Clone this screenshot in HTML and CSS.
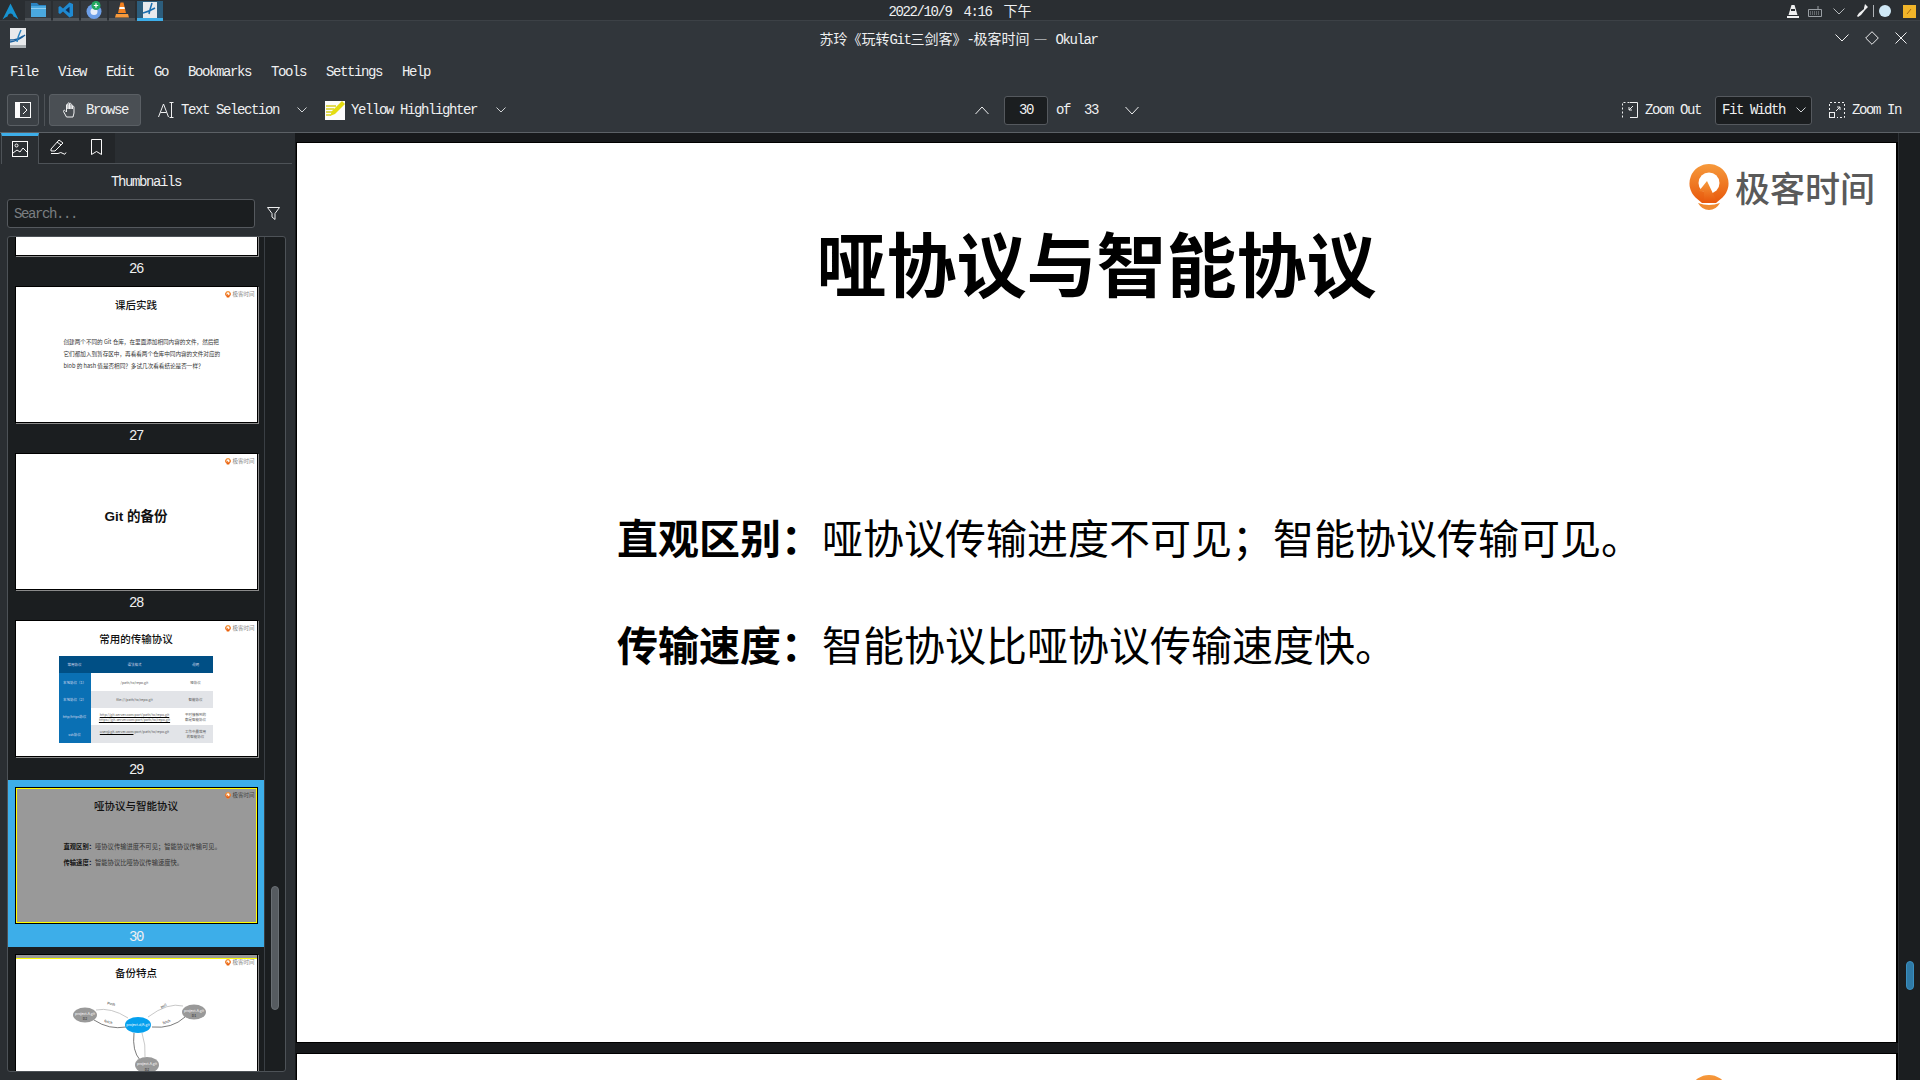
FILE: index.html
```html
<!DOCTYPE html>
<html lang="zh-CN">
<head>
	<meta charset="utf-8">
	<title>Okular</title>
	<link rel="stylesheet" href="styles.css">
</head>
<body>
	<svg class="defs" width="0" height="0">
		<defs>
			<linearGradient id="geek" x1="0" y1="0" x2="0" y2="1">
				<stop offset="0" stop-color="#f69a3c"/>
				<stop offset="1" stop-color="#e8580c"/>
			</linearGradient>
			<symbol id="logo" viewBox="0 0 40 46">
				<path fill="url(#geek)" d="M20 0a19.500 19.500 0 0 1 13.500 33.600L27 39H13l-6.500-5.400A19.500 19.500 0 0 1 20 0z"/>
				<circle cx="20" cy="19" r="10.500" fill="#fff"/>
				<path fill="url(#geek)" d="M18 17l-8 10 5 1v10h13z"/>
				<path fill="#f08a30" d="M9 39q11 4 22 0q-4 7-11 7t-11-7z"/>
			</symbol>
		</defs>
	</svg>

	<div class="panel">
		<div class="tasks">
			<svg class="arch" width="17" height="17" viewBox="0 0 17 17"><path fill="#1793d1" d="M8.500 0.500L16.500 16.500Q12.500 13.500 11.500 13.500Q10.800 10.500 8.500 10.500Q6.200 10.500 5.500 13.500Q4.500 13.500 0.500 16.500z"/></svg>
			<div class="task">
				<svg width="17" height="16" viewBox="0 0 17 16"><path fill="#2b83c0" d="M1 1h6l2 2h7v3H1z"/><rect x="1" y="4" width="15" height="11" fill="#4aa8de"/><rect x="1" y="6" width="15" height="1" fill="#8fcdf0"/></svg>
			</div>
			<div class="task">
				<svg width="16" height="16" viewBox="0 0 16 16"><path fill="#1f8ad2" d="M11.500 0.500L15 2v12l-3.500 1.500L5 9.500 2 12 0.500 11V5L2 4l3 2.500z"/><path fill="#0f2f55" d="M11.500 4.800L7.500 8l4 3.200z"/></svg>
			</div>
			<div class="task">
				<svg width="18" height="18" viewBox="0 0 18 18"><circle cx="9" cy="10.500" r="7.500" fill="#6d9fe8"/><circle cx="9" cy="10.500" r="3.500" fill="#e8eefa"/><circle cx="11" cy="4.500" r="4.500" fill="#22a860"/><path stroke="#fff" stroke-width="1.200" d="M11 2.300v4.400M8.800 4.500h4.400"/></svg>
			</div>
			<div class="task">
				<svg width="14" height="16" viewBox="0 0 14 16"><path fill="#f58220" d="M5.500 0.500h3L11 11H3z"/><path fill="#fff" d="M4.600 5h4.800l.5 2H4.100z"/><path fill="#f79a3c" d="M1 12h12l1 3.500H0z"/></svg>
			</div>
			<div class="task task-on">
				<svg width="14" height="16" viewBox="0 0 14 16"><rect width="14" height="16" fill="#e8eaec"/><path fill="none" stroke="#1a6fb0" stroke-width="1.500" d="M0 11q7 -2 12 -5M9 1Q7 7 6 12"/></svg>
			</div>
		</div>
		<div class="clock">2022/10/9 4:16 <span class="cjk">下午</span></div>
		<div class="tray">
			<svg width="12" height="13" viewBox="0 0 12 13"><path fill="#eff0f1" d="M4.500 0h3l3 10h-9z"/><path fill="#2a2e32" d="M4 4h4v2H4z"/><rect y="11" width="12" height="2" fill="#eff0f1"/></svg>
			<svg class="tray-kbd" width="14" height="11" viewBox="0 0 14 11"><path fill="none" stroke="#9a9fa4" d="M.5 3.500h13v7H.5zM10 3.500V0"/><path stroke="#9a9fa4" stroke-dasharray="1 1" d="M2 6h10M2 8h10"/></svg>
			<svg width="12" height="7" viewBox="0 0 12 7"><path fill="none" stroke="#b4b8bb" d="M.5.500L6 6 11.500.500"/></svg>
			<svg class="tray-pen" width="12" height="14" viewBox="0 0 12 14"><path fill="#eff0f1" d="M8 0l3 3-2 2-1 1-4 5-3 2-1-1 2-3 5-4 0-1z"/></svg>
			<div class="tray-sep"></div>
			<div class="tray-dot"></div>
			<svg class="tray-note" width="13" height="13" viewBox="0 0 13 13"><rect width="13" height="13" fill="#f0b429"/><path stroke="#a86a10" d="M4 9l4-5"/></svg>
		</div>
	</div>

	<div class="titlebar">
		<svg width="16" height="20" viewBox="0 0 16 20"><rect width="16" height="20" fill="#e8eaec"/><rect y="17" width="16" height="3" fill="#aab0b4"/><path fill="none" stroke="#1a5f9c" stroke-width="1.500" d="M0 14q8 -1 15 -7M0 12q7 0 13 -4"/><path fill="none" stroke="#2b83c0" stroke-width="1.500" d="M11 2Q8 8 7 14"/></svg>
		<div class="win-title"><span class="cjk">苏玲《玩转</span>Git<span class="cjk">三剑客》</span>-<span class="cjk">极客时间 —</span> Okular</div>
		<div class="win-btns">
			<svg width="14" height="8" viewBox="0 0 14 8"><path fill="none" stroke="#eff0f1" d="M.5.500L7 7 13.500.500"/></svg>
			<svg width="14" height="14" viewBox="0 0 14 14"><path fill="none" stroke="#eff0f1" d="M7 .7L13.300 7 7 13.300.7 7z"/></svg>
			<svg width="12" height="12" viewBox="0 0 12 12"><path fill="none" stroke="#eff0f1" d="M.5.500l11 11M11.500.500l-11 11"/></svg>
		</div>
	</div>

	<div class="menubar">
		<span>File</span><span>View</span><span>Edit</span><span>Go</span><span>Bookmarks</span><span>Tools</span><span>Settings</span><span>Help</span>
	</div>

	<div class="toolbar">
		<div class="tool-btn side-toggle">
			<svg width="16" height="16" viewBox="0 0 16 16"><rect x=".5" y=".5" width="15" height="15" fill="none" stroke="#fcfcfc"/><rect width="5" height="16" fill="#fcfcfc"/><path fill="none" stroke="#fcfcfc" d="M8 4l4 4-4 4"/></svg>
		</div>
		<div class="tool-sep"></div>
		<div class="tool-btn browse">
			<svg width="16" height="16" viewBox="0 0 15 16"><path fill="none" stroke="#eff0f1" d="M4 15L1 9.500c-.5-1 .8-1.700 1.500-1L4 10V3c0-1 1.500-1 1.500 0v4-5.500c0-1 1.500-1 1.500 0V7 2c0-1 1.500-1 1.500 0v5-3.500c0-1 1.500-1 1.500 0V7 5c0-1 1.500-1 1.500 0v6l-1 4z"/></svg>
			Browse
		</div>
		<div class="tool-item text-sel">
			<svg width="16" height="16" viewBox="0 0 16 16"><path fill="none" stroke="#eff0f1" d="M.5 15L5.500 2l5 13M2.500 10.500h6M13.500 1v14M11.500.5h4M11.500 15.500h4"/></svg>
			Text Selection
			<svg class="chev" width="10" height="6" viewBox="0 0 10 6"><path fill="none" stroke="#d0d3d5" d="M.5.500L5 5 9.500.500"/></svg>
		</div>
		<div class="tool-item highlight">
			<svg width="20" height="20" viewBox="0 0 20 20"><rect y="1" width="20" height="19" fill="#fcfcfc"/><path stroke="#d8d020" stroke-width="1.500" d="M1 6h10M1 9h8M1 12h6M1 15h5"/><path fill="#e4dc10" d="M17 1l3 3-10 10-5 2 2-5z"/></svg>
			Yellow Highlighter
			<svg class="chev" width="10" height="6" viewBox="0 0 10 6"><path fill="none" stroke="#d0d3d5" d="M.5.500L5 5 9.500.500"/></svg>
		</div>
		<div class="pager">
			<svg width="14" height="9" viewBox="0 0 14 9"><path fill="none" stroke="#eff0f1" d="M.5 8L7 1l6.500 7"/></svg>
			<div class="field page-no">30</div>
			<span class="of">of</span>
			<span class="total">33</span>
			<svg width="14" height="9" viewBox="0 0 14 9"><path fill="none" stroke="#eff0f1" d="M.5 1L7 8l6.500-7"/></svg>
		</div>
		<div class="zoom-tools">
			<div class="tool-item">
				<svg width="16" height="16" viewBox="0 0 16 16"><path fill="none" stroke="#eff0f1" d="M8 .5h7.500v15H8"/><path fill="none" stroke="#eff0f1" stroke-dasharray="2 2" d="M.5 15.500V.5H8"/><path fill="none" stroke="#eff0f1" d="M11 4L7 8M7 5v3h3"/></svg>
				Zoom Out
			</div>
			<div class="field combo">Fit Width
				<svg width="10" height="6" viewBox="0 0 10 6"><path fill="none" stroke="#d0d3d5" d="M.5.500L5 5 9.500.500"/></svg>
			</div>
			<div class="tool-item">
				<svg width="16" height="16" viewBox="0 0 16 16"><path fill="none" stroke="#eff0f1" stroke-dasharray="2 2" d="M.5 8V.5h15v15H8"/><rect x=".5" y="10.500" width="5" height="5" fill="none" stroke="#eff0f1"/><path fill="none" stroke="#eff0f1" d="M7 9l4-4M8 5h3v3"/></svg>
				Zoom In
			</div>
		</div>
	</div>

	<div class="main">
		<div class="sidebar">
			<div class="tabs">
				<div class="tab tab-on">
					<svg width="16" height="16" viewBox="0 0 16 16"><rect x=".5" y=".5" width="15" height="15" fill="none" stroke="#fcfcfc"/><circle cx="4.500" cy="4.500" r="1.500" fill="none" stroke="#fcfcfc"/><path fill="none" stroke="#fcfcfc" d="M1 12l4-3 3 2 3-4 4 4"/></svg>
				</div>
				<div class="tab">
					<svg width="17" height="16" viewBox="0 0 17 16"><path fill="none" stroke="#fcfcfc" d="M1 10l8-9 4 3-8 8H1zM7 3l4 3"/><path fill="none" stroke="#fcfcfc" d="M1 14.500h7q3-2 5 0t3-1"/></svg>
				</div>
				<div class="tab">
					<svg width="11" height="16" viewBox="0 0 11 16"><path fill="none" stroke="#fcfcfc" d="M.5.500h10v15l-5-3-5 3z"/></svg>
				</div>
			</div>
			<div class="side-title">Thumbnails</div>
			<div class="search-row">
				<div class="field search">Search...</div>
				<svg width="13" height="13" viewBox="0 0 13 13"><path fill="none" stroke="#eff0f1" d="M.5.500h12L8 6.500v6l-3-2.500V6.500z"/></svg>
			</div>
			<div class="thumb-list">
				<div class="thumb-scroll">
					<div class="thumb-item">
						<div class="thumb"></div>
						<div class="thumb-no">26</div>
					</div>
					<div class="thumb-item">
						<div class="thumb">
							<div class="mini-logo"><svg width="6" height="7"><use href="#logo"/></svg>极客时间</div>
							<div class="mini-title">课后实践</div>
							<div class="mini-para">创建两个不同的 Git 仓库，在里面添加相同内容的文件，然后把<br>它们都加入到暂存区中，再看看两个仓库中同内容的文件对应的<br>blob 的 hash 值是否相同？多试几次看看结论是否一样？</div>
						</div>
						<div class="thumb-no">27</div>
					</div>
					<div class="thumb-item">
						<div class="thumb">
							<div class="mini-logo"><svg width="6" height="7"><use href="#logo"/></svg>极客时间</div>
							<div class="mini-title mini-center">Git 的备份</div>
						</div>
						<div class="thumb-no">28</div>
					</div>
					<div class="thumb-item">
						<div class="thumb">
							<div class="mini-logo"><svg width="6" height="7"><use href="#logo"/></svg>极客时间</div>
							<div class="mini-title">常用的传输协议</div>
							<div class="mini-table">
								<div class="th">常用协议</div><div class="th">语法格式</div><div class="th">说明</div>
								<div class="tk">本地协议（1）</div><div>/path/to/repo.git</div><div>哑协议</div>
								<div class="tk">本地协议（2）</div><div class="alt">file:///path/to/repo.git</div><div class="alt">智能协议</div>
								<div class="tk">http/https协议</div><div class="mark"><u>http://git-server.com:port/path/to/repo.git</u><br><u>https://git-server.com:port/path/to/repo.git</u></div><div>平时接触到的<br>都是智能协议</div>
								<div class="tk">ssh协议</div><div class="alt mark"><u>user@git-server.com</u>:port/path/to/repo.git</div><div class="alt">工作中最常用<br>的智能协议</div>
							</div>
						</div>
						<div class="thumb-no">29</div>
					</div>
					<div class="thumb-item thumb-on">
						<div class="thumb">
							<div class="mini-logo"><svg width="6" height="7"><use href="#logo"/></svg>极客时间</div>
							<div class="mini-title">哑协议与智能协议</div>
							<div class="mini-rows">
								<div><b>直观区别：</b>哑协议传输进度不可见；智能协议传输可见。</div>
								<div><b>传输速度：</b>智能协议比哑协议传输速度快。</div>
							</div>
						</div>
						<div class="thumb-no">30</div>
					</div>
					<div class="thumb-item">
						<div class="thumb thumb-next">
							<div class="mini-logo"><svg width="6" height="7"><use href="#logo"/></svg>极客时间</div>
							<div class="mini-title">备份特点</div>
							<svg class="mini-graph" width="241" height="135" viewBox="0 0 241 135">
								<g fill="none" stroke="#b0b0b0" stroke-width=".7">
									<path d="M80 55q15 -3 32 8"/>
									<path d="M132 62q20 -15 35 -11"/>
									<path d="M126 78q4 12 3 24"/>
								</g>
								<g fill="none" stroke="#444" stroke-width=".7">
									<path d="M78 65q15 10 32 7"/>
									<path d="M136 72q20 2 33 -10"/>
									<path d="M118 78q-2 18 6 27"/>
								</g>
								<ellipse cx="69" cy="60" rx="12" ry="7.500" fill="#999"/>
								<ellipse cx="178" cy="57" rx="12" ry="7.500" fill="#999"/>
								<ellipse cx="131" cy="110" rx="12" ry="8" fill="#999"/>
								<ellipse cx="122" cy="70" rx="13" ry="8" fill="#05a0ee"/>
								<g class="graph-text" text-anchor="middle" fill="#fff">
									<text x="69" y="60">project-A.git</text>
									<text x="178" y="57">project-A.git</text>
									<text x="131" y="110">project-A.git</text>
									<text x="122" y="71">project-d/A.git</text>
								</g>
								<g class="graph-text" text-anchor="middle" fill="#222">
									<text x="69" y="65">D2</text>
									<text x="178" y="62">D1</text>
									<text x="131" y="116">D2</text>
									<text x="95" y="50" transform="rotate(12 95 50)">Push</text>
									<text x="148" y="52" transform="rotate(-25 148 52)">pull</text>
									<text x="92" y="68" transform="rotate(15 92 68)">fetch</text>
									<text x="151" y="68" transform="rotate(-20 151 68)">fetch</text>
								</g>
							</svg>
						</div>
						<div class="thumb-no">31</div>
					</div>
				</div>
				<div class="list-bar"><div class="list-handle"></div></div>
			</div>
		</div>

		<div class="viewer">
			<div class="pages">
				<div class="page">
					<div class="brand"><svg width="40" height="46"><use href="#logo"/></svg><span>极客时间</span></div>
					<h1>哑协议与智能协议</h1>
					<div class="point"><b>直观区别：</b>哑协议传输进度不可见；智能协议传输可见。</div>
					<div class="point"><b>传输速度：</b>智能协议比哑协议传输速度快。</div>
				</div>
				<div class="page">
					<div class="brand"><svg width="40" height="46"><use href="#logo"/></svg><span>极客时间</span></div>
				</div>
			</div>
			<div class="view-bar"><div class="view-handle"></div></div>
		</div>
	</div>
</body>
</html>
```

FILE: styles.css
```css
* {
	box-sizing: border-box;
}
html, body {
	margin: 0;
	height: 1080px;
	overflow: hidden;
}
body {
	background: #31363b;
	color: #eff0f1;
	font-family: "Liberation Mono", "Noto Sans CJK SC", monospace;
	font-size: 14px;
	letter-spacing: -1.4px;
	display: flex;
	flex-direction: column;
}
svg {
	display: block;
	flex: none;
}
.defs {
	position: absolute;
}
.cjk {
	font-family: "Noto Sans CJK SC", sans-serif;
	font-size: 14px;
	letter-spacing: 0;
}

/* top panel */
.panel {
	height: 21px;
	background: #2a2e32;
	border-bottom: 1px solid #3c4146;
	display: grid;
	grid-template-columns: 1fr auto 1fr;
	align-items: center;
}
.tasks {
	display: flex;
	height: 20px;
	gap: 2px;
	align-items: stretch;
}
.arch {
	margin: 0 4px 0 2px;
	align-self: center;
}
.task {
	width: 26px;
	background: #33383d;
	border-bottom: 3px solid #50555a;
	display: flex;
	align-items: center;
	justify-content: center;
}
.task-on {
	background: #2c5d7c;
	border-bottom-color: #3daee9;
}
.clock {
	line-height: 20px;
	word-spacing: 5px;
	white-space: nowrap;
}
.tray {
	display: flex;
	align-items: center;
	justify-content: flex-end;
	padding-right: 4px;
}
.tray svg {
	margin-left: 11px;
}
.tray svg.tray-kbd {
	margin-left: 9px;
}
.tray svg.tray-pen {
	margin-left: 12px;
}
.tray svg.tray-note {
	margin-left: 12px;
}
.tray-sep {
	width: 1px;
	height: 12px;
	background: #b0b4b8;
	margin-left: 4px;
}
.tray-dot {
	width: 12px;
	height: 12px;
	border-radius: 50%;
	background: #cfe8f6;
	margin-left: 5px;
}

/* window title */
.titlebar {
	height: 41px;
	display: grid;
	grid-template-columns: 1fr auto 1fr;
	align-items: center;
	padding: 0 13px 7px 10px;
}
.win-title {
	white-space: nowrap;
	word-spacing: 1px;
}
.win-btns {
	display: flex;
	justify-content: flex-end;
	align-items: center;
	gap: 16px;
}

.menubar {
	height: 22px;
	display: flex;
	align-items: flex-start;
	line-height: 21px;
}
.menubar span {
	padding: 0 10px;
}

/* toolbar */
.toolbar {
	height: 49px;
	padding: 10px 0 6px 7px;
	border-bottom: 1px solid #5c6166;
	display: flex;
	align-items: center;
	flex: none;
}
.tool-btn {
	height: 32px;
	display: flex;
	align-items: center;
	justify-content: center;
	border: 1px solid #5a5f64;
	border-radius: 3px;
	background: #3b4045;
}
.side-toggle {
	width: 32px;
}
.tool-sep {
	width: 1px;
	height: 32px;
	background: #4d5257;
	margin: 0 4px 0 5px;
}
.browse {
	width: 92px;
	gap: 8px;
	background: #4a4f54;
}
.tool-item {
	display: flex;
	align-items: center;
	gap: 7px;
}
.text-sel {
	margin-left: 17px;
}
.text-sel .chev {
	margin-left: 11px;
}
.highlight {
	margin-left: 18px;
	gap: 6px;
}
.highlight .chev {
	margin-left: 13px;
}
.field {
	background: #1b1e20;
	border: 1px solid #55595e;
	border-radius: 3px;
}
.pager {
	display: flex;
	align-items: center;
	margin-left: 469px;
}
.page-no {
	width: 44px;
	height: 29px;
	line-height: 27px;
	text-align: center;
	margin: 0 8px 0 15px;
}
.of {
	margin-right: 14px;
}
.total {
	margin-right: 27px;
}
.zoom-tools {
	display: flex;
	align-items: center;
	margin-left: auto;
	padding-right: 19px;
}
.combo {
	width: 97px;
	height: 29px;
	padding: 0 5px 0 6px;
	margin: 0 17px 0 14px;
	display: flex;
	align-items: center;
	justify-content: space-between;
}

/* sidebar */
.main {
	flex: 1;
	display: flex;
	min-height: 0;
}
.sidebar {
	width: 295px;
	background: #2a2e32;
	display: flex;
	flex-direction: column;
	padding-bottom: 8px;
}
.tabs {
	height: 31px;
	margin: 0 3px 0 1px;
	border-bottom: 1px solid #4d5257;
	display: flex;
	flex: none;
}
.tab {
	width: 38px;
	height: 30px;
	background: #232629;
	display: flex;
	align-items: center;
	justify-content: center;
	padding-bottom: 2px;
}
.tab-on {
	height: 31px;
	background: #2a2e32;
	border-top: 3px solid #3daee9;
	border-left: 1px solid #4d5257;
	border-right: 1px solid #4d5257;
}
.side-title {
	height: 35px;
	line-height: 37px;
	text-align: center;
	padding-right: 3px;
	flex: none;
}
.search-row {
	display: flex;
	align-items: center;
	padding-left: 7px;
	gap: 12px;
	flex: none;
}
.search {
	width: 248px;
	height: 29px;
	line-height: 28px;
	padding-left: 6px;
	color: #7a7e82;
}
.thumb-list {
	flex: 1;
	min-height: 0;
	margin: 8px 9px 0 7px;
	background: #1b1e20;
	border: 1px solid #4d5257;
	border-radius: 3px;
	display: flex;
	overflow: hidden;
}
.thumb-scroll {
	width: 256px;
	flex: none;
}
.thumb-item {
	height: 167px;
	padding-top: 7px;
}
.thumb-item:first-child {
	margin-top: -125px;
}
.thumb {
	width: 243px;
	height: 137px;
	margin: 0 auto;
	position: relative;
	overflow: hidden;
	background: #fff;
	color: #111;
	border: 1px solid #000;
	box-shadow: 1px 1px 0 #8a8a8a;
	font-family: "Noto Sans CJK SC", sans-serif;
	letter-spacing: 0;
}
.thumb-no {
	height: 23px;
	line-height: 26px;
	text-align: center;
	color: #eff0f1;
}
.thumb-on {
	background: #3daee9;
}
.thumb-on .thumb {
	background: #999;
	box-shadow: inset 0 0 0 1px #ff0;
}
.thumb-on .mini-logo {
	color: #444;
}
.thumb-next::before {
	content: "";
	position: absolute;
	left: 0;
	right: 0;
	top: 0;
	height: 3px;
	background: #999;
	border-bottom: 1px solid #ff0;
}
.mini-logo {
	position: absolute;
	top: 2px;
	right: 2px;
	display: flex;
	align-items: center;
	gap: 1px;
	font-size: 5.500px;
	line-height: 10px;
	color: #888;
}
.mini-title {
	padding-top: 10px;
	font-size: 10.500px;
	font-weight: 500;
	line-height: 15px;
	text-align: center;
}
.mini-center {
	padding-top: 55px;
	font-family: "Liberation Sans", "Noto Sans CJK SC", sans-serif;
	font-weight: 700;
	font-size: 13.500px;
}
.mini-para {
	margin: 24px 0 0 48px;
	font-size: 5.600px;
	line-height: 12px;
	white-space: nowrap;
	color: #333;
}
.mini-table {
	margin: 10px 0 0 43px;
	width: 154px;
	display: grid;
	grid-template-columns: 32px 88px 34px;
	grid-template-rows: 17px 18px 17px 17px 18px;
	font-size: 3.500px;
	line-height: 5px;
	color: #555;
	text-align: center;
}
.mini-table div {
	display: flex;
	align-items: center;
	justify-content: center;
}
.mini-table .th {
	background: #004f85;
	color: #dde;
}
.mini-table .tk {
	background: #0a70b4;
	color: #dde;
}
.mini-table .alt {
	background: #e2e4e8;
}
.mini-table .mark {
	display: block;
	padding-top: 4px;
}
.mini-table u {
	text-decoration: underline 1px #000;
	text-underline-offset: 1px;
}
.mini-rows {
	margin: 26px 0 0 48px;
	font-size: 6.300px;
	line-height: 15.500px;
	color: #333;
}
.mini-rows b {
	color: #111;
}
.mini-graph {
	position: absolute;
	left: 0;
	top: 0;
}
.graph-text {
	font-size: 3.500px;
}
.list-bar {
	flex: 1;
	border-left: 1px solid #3a3f44;
	position: relative;
}
.list-handle {
	position: absolute;
	left: 6px;
	top: 649px;
	width: 8px;
	height: 124px;
	border-radius: 4px;
	background: #565b60;
	border: 1px solid #6a6f74;
}

/* page view */
.viewer {
	flex: 1;
	display: flex;
	min-width: 0;
	background: #17191b;
}
.pages {
	flex: 1;
	padding: 9px 0 0 1px;
	overflow: hidden;
}
.page {
	height: 901px;
	background: #fff;
	border: 1px solid #000;
	border-width: 1px 2px 1px 1px;
	margin-bottom: 10px;
	position: relative;
	color: #000;
	font-family: "Noto Sans CJK SC", sans-serif;
	letter-spacing: 0;
}
.brand {
	position: absolute;
	top: 21px;
	right: 21px;
	display: flex;
	align-items: center;
	gap: 6px;
	font-size: 35px;
	font-weight: 500;
	line-height: 44px;
	color: #5a5a5a;
}
h1 {
	margin: 0;
	padding-top: 74px;
	font-size: 70px;
	font-weight: 700;
	line-height: 90px;
	text-align: center;
}
.point {
	padding-left: 320px;
	font-size: 41px;
	line-height: 60px;
	white-space: nowrap;
	margin-top: 47px;
}
h1 + .point {
	margin-top: 199px;
}
.view-bar {
	width: 22px;
	background: #1b1e20;
	border-left: 1px solid #2d3135;
	position: relative;
}
.view-handle {
	position: absolute;
	left: 7px;
	top: 828px;
	width: 8px;
	height: 29px;
	border-radius: 4px;
	background: #2f7aa6;
	border: 1px solid #3a8fc0;
}
```
